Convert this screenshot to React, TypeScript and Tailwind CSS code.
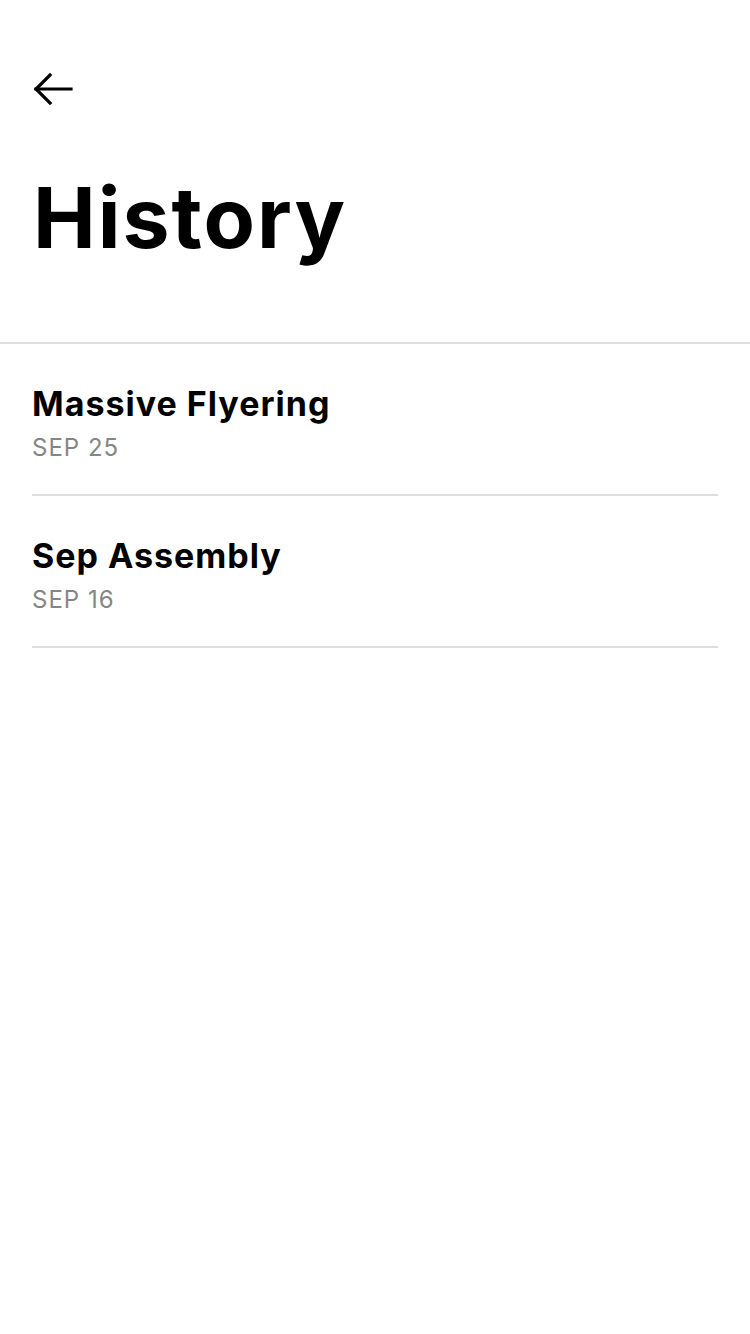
import React from "react";

const items = [
  { title: "Massive Flyering", date: "SEP 25" },
  { title: "Sep Assembly", date: "SEP 16" },
];

function BackArrow() {
  return (
    <svg width="40" height="34" viewBox="0 0 40 34" fill="none" stroke="#000" strokeWidth="3.2" strokeLinecap="square">
      <path d="M3 17 H38" />
      <path d="M17 3 L3 17 L17 31" />
    </svg>
  );
}

export default function App() {
  return (
    <div className="min-h-[1334px] w-[750px] bg-white" style={{ fontFamily: "Inter, 'Noto Sans', sans-serif" }}>
      <div className="px-[33px] pt-[72px]">
        <button className="block">
          <BackArrow />
        </button>
        <h1 className="mt-[62px] text-[84px] font-bold leading-[100px] tracking-[2px] text-black">History</h1>
      </div>
      <div className="mt-[74px] h-[2px] bg-[#dddddd]" />
      <ul className="px-[32px]">
        {items.map((it) => (
          <li key={it.title} className="border-b-2 border-[#dddddd] pt-[38px] pb-[31px]">
            <div className="text-[34px] font-bold leading-[44px] tracking-[1px] text-black">{it.title}</div>
            <div className="mt-[7px] text-[24px] leading-[30px] tracking-[1px] text-[#858585]">{it.date}</div>
          </li>
        ))}
      </ul>
    </div>
  );
}
